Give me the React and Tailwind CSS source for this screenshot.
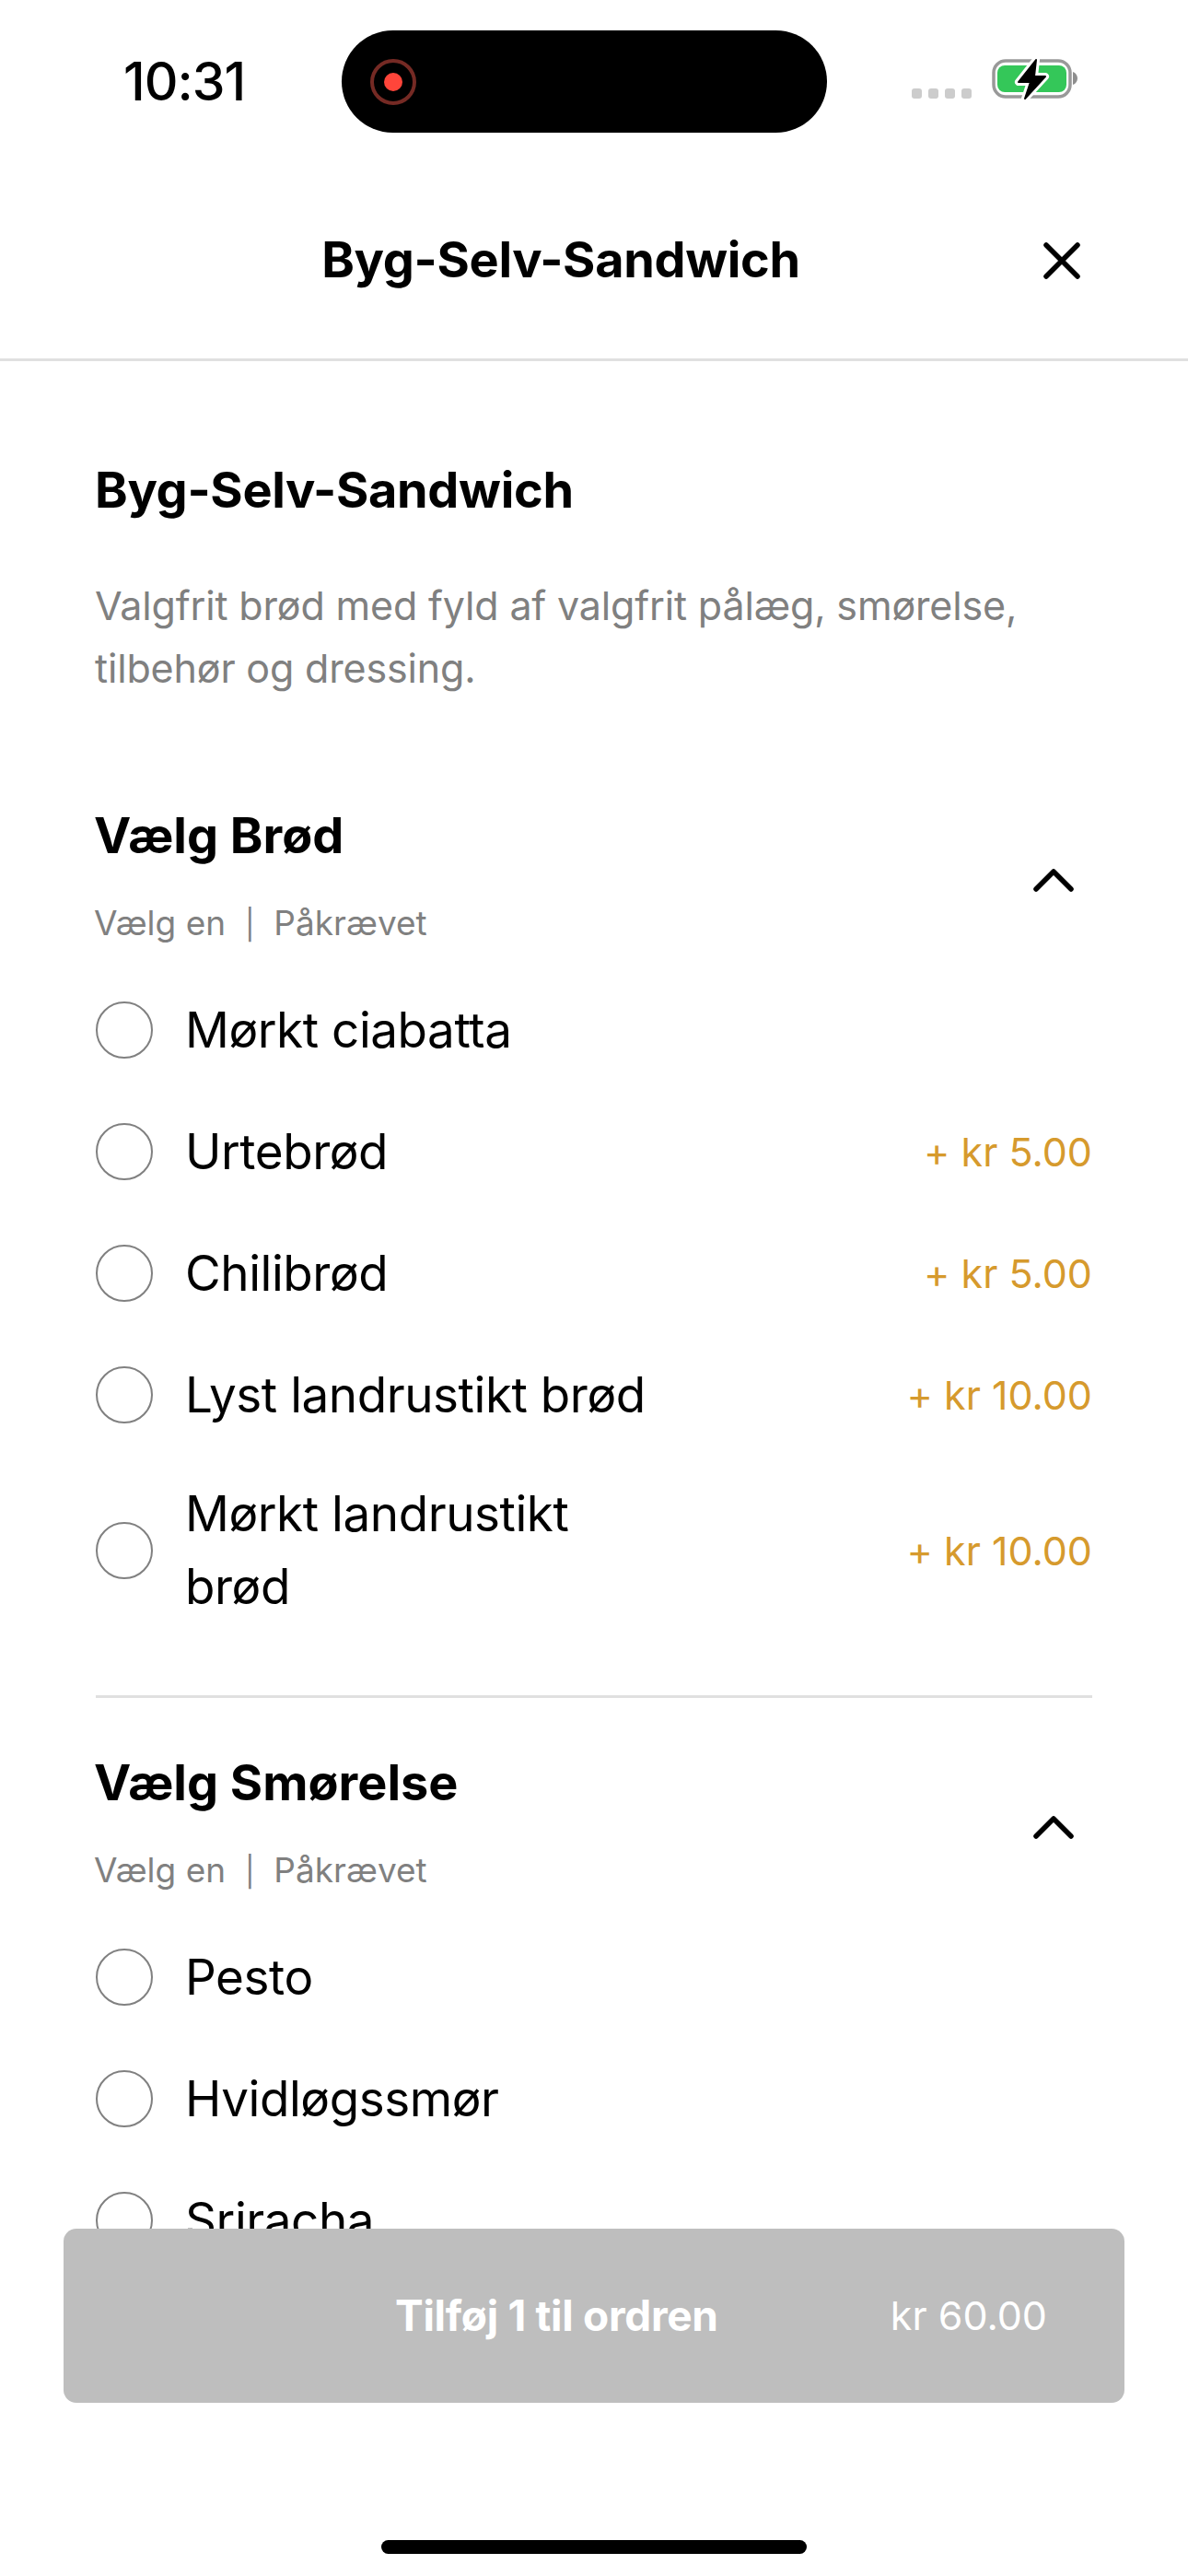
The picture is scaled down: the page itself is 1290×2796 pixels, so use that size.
import React from "react";

const font = { fontFamily: "Inter, 'Noto Sans', sans-serif" };

const BOLT = "M48 2 29 26h13l-6 18 22-24H46z";

const breadOptions = [
    { name: "Mørkt ciabatta" },
    { name: "Urtebrød", price: "+ kr 5.00" },
    { name: "Chilibrød", price: "+ kr 5.00" },
    { name: "Lyst landrustikt brød", price: "+ kr 10.00" },
    { name: "Mørkt landrustikt brød", price: "+ kr 10.00" },
];

const spreadOptions = [{ name: "Pesto" }, { name: "Hvidløgssmør" }, { name: "Sriracha" }];

const StatusBar = () => (
    <div className="relative h-[170px] shrink-0 flex items-start pl-[134px] pt-[55px]">
        <span className="text-[57px] leading-[68px] font-medium text-black tracking-[-1px] w-[237px]">10:31</span>
        <div className="w-[527px] h-[111px] mt-[-22px] bg-black rounded-[56px] flex items-center pl-[31px]">
            <svg width="50" height="50" viewBox="0 0 50 50">
                <circle cx="25" cy="25" r="23" fill="none" stroke="#752a24" strokeWidth="4" />
                <circle cx="25" cy="25" r="10" fill="#ff453a" />
            </svg>
        </div>
        <div className="flex items-end ml-[92px] mt-[-6px] h-[60px]">
            <div className="flex gap-[7px] mb-[2px] mr-[22px]">
                <i className="block w-[11px] h-[11px] rounded-[3px] bg-[#cccccc]" />
                <i className="block w-[11px] h-[11px] rounded-[3px] bg-[#cccccc]" />
                <i className="block w-[11px] h-[11px] rounded-[3px] bg-[#cccccc]" />
                <i className="block w-[11px] h-[11px] rounded-[3px] bg-[#cccccc]" />
            </div>
            <svg width="94" height="46" viewBox="0 0 94 46">
                <rect x="2" y="3" width="83" height="39" rx="13" fill="none" stroke="#999999" strokeWidth="3.5" />
                <rect x="6" y="8" width="75" height="29" rx="8" fill="#34c759" />
                <path d="M88 15c3 1 5 4 5 7s-2 6-5 7z" fill="#8e8e8e" />
                <path d={BOLT} fill="#fff" stroke="#fff" strokeWidth="8" strokeLinejoin="round" />
                <path d={BOLT} fill="#000" stroke="#000" strokeWidth="2" strokeLinejoin="round" />
            </svg>
        </div>
    </div>
);

const Radio = () => <span className="block shrink-0 w-[62px] h-[62px] rounded-full border-2 border-[#808080]" />;

const OptionRow = ({ name, price }) => (
    <div className="flex items-center min-h-[132px] py-[24px]">
        <Radio />
        <span className="ml-[35px] w-[520px] text-[53px] leading-[79px] tracking-[-0.45px] text-black">{name}</span>
        {price && <span className="ml-auto text-[43px] text-[#d69a2d]">{price}</span>}
    </div>
);

const GroupHeader = ({ title }) => (
    <div className="flex items-center justify-between">
        <div className="-ml-[2px]">
            <h3 className="text-[54px] leading-[64px] font-bold text-black">{title}</h3>
            <p className="mt-[40px] text-[37px] leading-[46px] text-[#808080]">
                Vælg en&nbsp; <span className="text-[32px]">|</span>&nbsp; Påkrævet
            </p>
        </div>
        <svg width="44" height="25" viewBox="0 0 44 25" fill="none" className="mr-[20px] mt-[8px]">
            <path d="M3 22 22 3l19 19" stroke="#000" strokeWidth="5.5" strokeLinecap="round" strokeLinejoin="round" />
        </svg>
    </div>
);

export default function App() {
    return (
        <div className="relative w-[1290px] h-[2796px] bg-white overflow-hidden flex flex-col" style={font}>
            <StatusBar />
            <header className="relative shrink-0 h-[222px] border-b-[3px] border-[#e0e0e0] flex items-start justify-center pt-[80px] pr-[72px]">
                <h1 className="text-[54px] leading-[64px] font-bold tracking-[-0.32px] text-black">Byg-Selv-Sandwich</h1>
                <svg width="40" height="40" viewBox="0 0 40 40" fill="none" className="absolute left-[1133px] top-[93px]">
                    <path d="M3 3l34 34M37 3 3 37" stroke="#000" strokeWidth="5.5" strokeLinecap="round" />
                </svg>
            </header>
            <main className="px-[104px] pt-[108px]">
                <h2 className="-ml-[1px] text-[54px] leading-[64px] font-bold tracking-[-0.32px] text-black">Byg-Selv-Sandwich</h2>
                <p className="-ml-[1px] mt-[59px] text-[43px] leading-[68px] tracking-[-0.16px] text-[#808080]">
                    Valgfrit brød med fyld af valgfrit pålæg, smørelse, tilbehør og dressing.
                </p>
                <section className="mt-[116px]">
                    <GroupHeader title="Vælg Brød" />
                    <div className="mt-[25px]">
                        {breadOptions.map((o) => (
                            <OptionRow key={o.name} {...o} />
                        ))}
                    </div>
                </section>
                <div className="mt-[54px] h-[3px] bg-[#e0e0e0]" />
                <section className="mt-[60px]">
                    <GroupHeader title="Vælg Smørelse" />
                    <div className="mt-[25px]">
                        {spreadOptions.map((o) => (
                            <OptionRow key={o.name} {...o} />
                        ))}
                    </div>
                </section>
            </main>
            <div className="absolute left-0 right-0 bottom-0 h-[377px] bg-white">
                <button className="absolute left-[69px] top-0 w-[1152px] h-[189px] rounded-[14px] bg-[#bebebe] text-white flex items-center">
                    <span className="ml-[360px] text-[46px] font-bold tracking-[-0.3px]">Tilføj 1 til ordren</span>
                    <span className="ml-auto mr-[84px] text-[43px]">kr 60.00</span>
                </button>
                <div className="absolute left-[414px] bottom-[24px] w-[462px] h-[15px] rounded-full bg-black" />
            </div>
        </div>
    );
}
